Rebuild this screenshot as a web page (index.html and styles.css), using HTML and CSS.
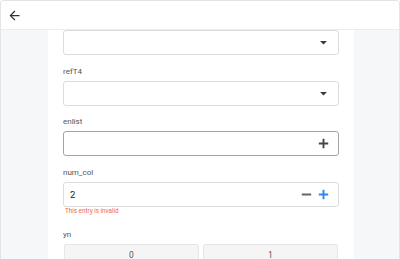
FILE: index.html
```html
<!DOCTYPE html>
<html>
<head>
<meta charset="utf-8">
<link rel="stylesheet" href="styles.css">
</head>
<body>
<div class="frame">
  <header class="topbar">
    <svg class="back" viewBox="0 0 24 24" width="15" height="15"><path d="M20 11H7.83l5.59-5.59L12 4l-8 8 8 8 1.41-1.41L7.83 13H20v-2z"/></svg>
  </header>
  <div class="page">
    <main class="form">
      <div class="field first">
        <div class="box">
          <span class="value"></span>
          <svg class="ico caret" viewBox="0 0 24 24" width="15" height="15"><path d="M6.5 9.5l5.5 5.5 5.5-5.5z"/></svg>
        </div>
      </div>
      <div class="field">
        <div class="label">refT4</div>
        <div class="box">
          <span class="value"></span>
          <svg class="ico caret" viewBox="0 0 24 24" width="15" height="15"><path d="M6.5 9.5l5.5 5.5 5.5-5.5z"/></svg>
        </div>
      </div>
      <div class="field">
        <div class="label">enlist</div>
        <div class="box dark">
          <span class="value"></span>
          <svg class="ico plus" viewBox="0 0 24 24" width="15" height="15"><path d="M19.5 13.5h-6v6h-3v-6h-6v-3h6v-6h3v6h6z"/></svg>
        </div>
      </div>
      <div class="field">
        <div class="label">num_col</div>
        <div class="box">
          <span class="value">2</span>
          <svg class="ico minus" viewBox="0 0 24 24" width="15" height="15"><path d="M19.5 13.5h-15v-3h15z"/></svg>
          <svg class="ico blue" viewBox="0 0 24 24" width="15" height="15"><path d="M19.5 13.5h-6v6h-3v-6h-6v-3h6v-6h3v6h6z"/></svg>
        </div>
        <div class="error">This entry is invalid</div>
      </div>
      <div class="field yn">
        <div class="label">yn</div>
        <div class="choices">
          <div class="choice">0</div>
          <div class="choice">1</div>
        </div>
      </div>
    </main>
  </div>
</div>
</body>
</html>
```
FILE: styles.css
```css
html, body {
  margin: 0;
  padding: 0;
  height: 100%;
  overflow: hidden;
  background: #ffffff;
  font-family: Roboto, "Liberation Sans", sans-serif;
}
.frame {
  box-sizing: border-box;
  height: 100%;
  border: 1px solid #e4e4e6;
  border-bottom: none;
  border-radius: 4px 4px 0 0;
  display: flex;
  flex-direction: column;
  overflow: hidden;
}
.topbar {
  height: 28px;
  flex: none;
  background: #fff;
  border-bottom: 1px solid #ececee;
  display: flex;
  align-items: center;
  padding-left: 6px;
}
.back { fill: #333; }
.page {
  flex: 1;
  background: #f6f7f9;
  display: flex;
  justify-content: center;
  padding-left: 47px;
  padding-right: 45px;
}
.form {
  flex: 1;
  background: #fff;
  padding: 0 15px;
}
.field { margin-top: 11.5px; }
.field.first { margin-top: 0; }
.label {
  font-size: 8px;
  line-height: 10px;
  color: #555;
  margin-bottom: 4px;
}
.box {
  box-sizing: border-box;
  height: 25px;
  border: 1px solid #dcdcdf;
  border-radius: 3px;
  display: flex;
  align-items: center;
  padding: 0 7px 0 6px;
  background: #fff;
}
.box.dark { border-color: #a4a4a8; }
.value {
  flex: 1;
  font-size: 9.5px;
  color: #222;
}
.ico { margin-left: 2px; }
.caret { fill: #3a3a3a; }
.plus { fill: #444; }
.minus { fill: #666; }
.blue { fill: #2f86eb; }
.error {
  font-size: 6.3px;
  line-height: 8px;
  color: #f26060;
  padding-left: 2px;
}
.field.yn { margin-top: 15px; }
.choices {
  display: flex;
  gap: 4px;
  padding: 0 1px;
}
.choice {
  flex: 1;
  height: 23px;
  box-sizing: border-box;
  border: 1px solid #e6e6e8;
  background: #f5f5f6;
  border-radius: 2px;
  display: flex;
  align-items: center;
  justify-content: center;
  font-size: 8.5px;
  color: #555;
}
```
